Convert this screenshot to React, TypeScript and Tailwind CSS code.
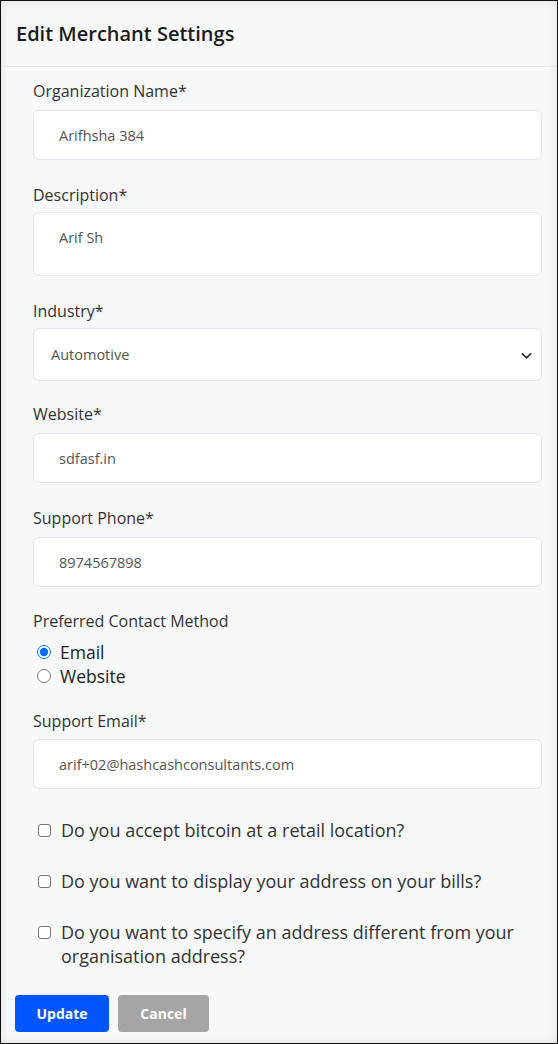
import React, { useState } from 'react';

const font = { fontFamily: '"Open Sans", "Noto Sans", sans-serif' };

const inputCls =
  'w-full h-[50px] rounded-md border border-[#e3e6ec] bg-white px-[25px] text-[14.5px] text-[#555] outline-none';

function Field({ label, value, tall, gap = 'mb-[7px]' }: { label: string; value: string; tall?: boolean; gap?: string }) {
  return (
    <div>
      <label className={`block text-[16px] leading-6 text-[#333] ${gap}`}>{label}</label>
      {tall ? (
        <textarea
          readOnly
          value={value}
          className="block w-full h-[64px] resize-none rounded-md border border-[#e3e6ec] bg-white px-[25px] pt-[14px] text-[14.5px] text-[#555] outline-none"
        />
      ) : (
        <input readOnly value={value} className={inputCls} />
      )}
    </div>
  );
}

function Check({ children }: { children: React.ReactNode }) {
  return (
    <label className="flex items-start gap-[10px] text-[18px] leading-6 text-[#333] pl-[5px]">
      <span className="mt-[6px] w-[13px] h-[13px] shrink-0 rounded-[3px] border border-[#767676] bg-white" />
      <span>{children}</span>
    </label>
  );
}

export default function App() {
  const [method, setMethod] = useState('email');

  return (
    <div
      className="w-[558px] h-[1044px] border border-[#111] bg-[#f7f8fa] shadow-[inset_0_0_10px_rgba(0,0,0,0.10)] flex flex-col"
      style={font}
    >
      <div className="h-[66px] shrink-0 border-b border-[#e3e6ef] flex items-center px-[15px]">
        <h2 className="text-[20px] font-semibold text-[#1c1c1c]">Edit Merchant Settings</h2>
      </div>

      <div className="pl-[32px] pr-[15px] pt-[12px] flex flex-col">
        <Field label="Organization Name*" value="Arifhsha 384" />
        <div className="mt-[23px]">
          <Field label="Description*" value="Arif Sh" tall gap="mb-[5px]" />
        </div>
        <div className="mt-[23px]">
          <label className="block text-[16px] leading-6 text-[#333] mb-[5px]">Industry*</label>
          <div className="relative h-[53px] rounded-md border border-[#e3e6ec] bg-white flex items-center pl-[17px] text-[14.5px] text-[#555]">
            Automotive
            <svg className="absolute right-[8px] top-[20px] w-[13px] h-[13px]" viewBox="0 0 16 16" fill="none" stroke="#333" strokeWidth="2.2" strokeLinecap="round" strokeLinejoin="round">
              <polyline points="3 6 8 11 13 6" />
            </svg>
          </div>
        </div>
        <div className="mt-[21px]">
          <Field label="Website*" value="sdfasf.in" />
        </div>
        <div className="mt-[23px]">
          <Field label="Support Phone*" value="8974567898" />
        </div>

        <div className="mt-[22px]">
          <div className="text-[16px] leading-6 text-[#333]">Preferred Contact Method</div>
          <div className="mt-[7px] flex flex-col pl-[4px]">
            {[
              ['email', 'Email'],
              ['website', 'Website'],
            ].map(([k, l]) => (
              <label key={k} className="flex items-center gap-[9px] text-[17.5px] leading-6 text-[#222]">
                <input
                  type="radio"
                  name="method"
                  checked={method === k}
                  onChange={() => setMethod(k)}
                  className="m-0 w-[14px] h-[14px] accent-[#0a6cff]"
                />
                {l}
              </label>
            ))}
          </div>
        </div>

        <div className="mt-[21px]">
          <Field label="Support Email*" value="arif+02@hashcashconsultants.com" gap="mb-[6px]" />
        </div>

        <div className="mt-[29px] flex flex-col gap-[27px]">
          <Check>Do you accept bitcoin at a retail location?</Check>
          <Check>Do you want to display your address on your bills?</Check>
          <Check>Do you want to specify an address different from your organisation address?</Check>
        </div>
      </div>

      <div className="mt-[27px] pl-[14px] flex gap-[9px]">
        <button type="button" className="w-[94px] h-[37px] rounded-[4px] bg-[#0055ff] text-white text-[14px] font-bold">
          Update
        </button>
        <button type="button" className="w-[91px] h-[37px] rounded-[4px] bg-[#a5a5a5] text-white text-[14px] font-bold">
          Cancel
        </button>
      </div>
    </div>
  );
}
